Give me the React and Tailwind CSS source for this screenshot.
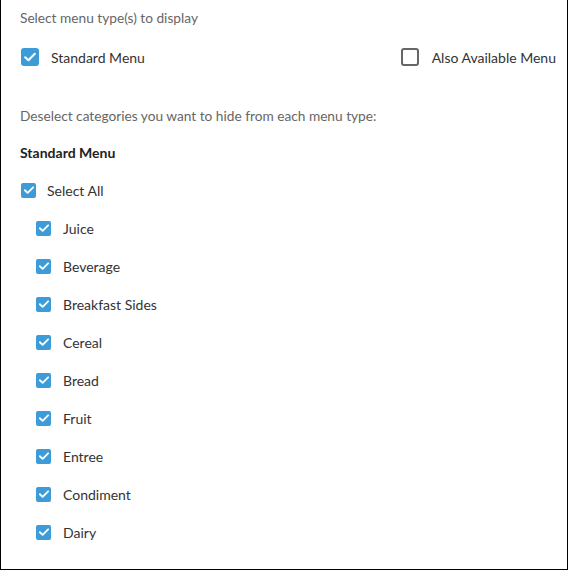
import { useState } from "react";

const CATEGORIES = [
  "Juice",
  "Beverage",
  "Breakfast Sides",
  "Cereal",
  "Bread",
  "Fruit",
  "Entree",
  "Condiment",
  "Dairy",
];

// small square checkbox with a white tick
const Box = ({ checked, size = "sm" }) => {
  const dims = size === "lg" ? "w-[18px] h-[18px] rounded-[3px]" : "w-[15px] h-[15px] rounded-[2px]";
  if (!checked) {
    return <span className={`${dims} shrink-0 border-2 border-[#666666] bg-white`} />;
  }
  return (
    <span className={`${dims} shrink-0 bg-[#3d9bd8] flex items-center justify-center`}>
      <svg viewBox="0 0 16 16" className={size === "lg" ? "w-[14px] h-[14px]" : "w-[12px] h-[12px]"}>
        <path d="M2.5 8.3 L6.2 11.8 L13.5 4.4" fill="none" stroke="white" strokeWidth="2.4" strokeLinecap="round" strokeLinejoin="round" />
      </svg>
    </span>
  );
};

export default function App() {
  const [standard, setStandard] = useState(true);
  const [also, setAlso] = useState(false);
  const [picked, setPicked] = useState(() => CATEGORIES.map(() => true));
  const allOn = picked.every(Boolean);

  return (
    <div
      className="w-[568px] h-[570px] bg-white border-l border-r border-b border-black pl-[19px] pr-[11px] pt-[8px] text-[14px] text-[#333333]"
      style={{ fontFamily: "Lato, 'Open Sans', sans-serif" }}
    >
      <p className="h-[20px] leading-[20px] text-[13.7px] text-[#666666]">Select menu type(s) to display</p>

      <div className="mt-[10px] h-[38px] flex items-center">
        <button className="flex items-center gap-[12px] pl-[1px]" onClick={() => setStandard(!standard)}>
          <Box checked={standard} size="lg" />
          <span>Standard Menu</span>
        </button>
        <button className="ml-auto flex items-center gap-[13px]" onClick={() => setAlso(!also)}>
          <Box checked={also} size="lg" />
          <span>Also Available Menu</span>
        </button>
      </div>

      <p className="mt-[30px] h-[20px] leading-[20px] text-[13.7px] text-[#666666]">
        Deselect categories you want to hide from each menu type:
      </p>

      <p className="mt-[17px] h-[20px] leading-[20px] font-bold text-[#222222]">Standard Menu</p>

      <button
        className="mt-[8px] h-[38px] flex items-center gap-[11px] pl-[1px]"
        onClick={() => setPicked(CATEGORIES.map(() => !allOn))}
      >
        <Box checked={allOn} />
        <span>Select All</span>
      </button>

      <ul>
        {CATEGORIES.map((c, i) => (
          <li key={c} className="h-[38px] flex items-center">
            <button
              className="flex items-center gap-[12px] pl-[16px]"
              onClick={() => setPicked(picked.map((v, j) => (j === i ? !v : v)))}
            >
              <Box checked={picked[i]} />
              <span>{c}</span>
            </button>
          </li>
        ))}
      </ul>
    </div>
  );
}
